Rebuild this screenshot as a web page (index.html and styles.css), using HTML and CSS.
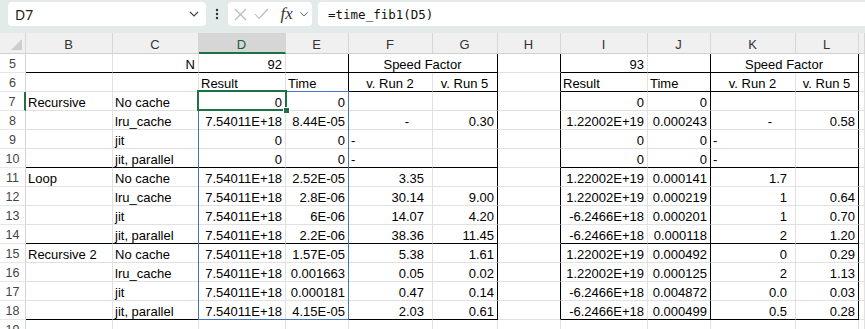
FILE: index.html
```html
<!DOCTYPE html>
<html lang="en">
<head>
    <meta charset="UTF-8">
    <title>time_fib1</title>
    <link rel="stylesheet" href="styles.css">
</head>
<body>
    <div class="bar">
        <div class="namebox">
            <span>D7</span>
            <svg class="chev" width="10" height="6" viewBox="0 0 10 6"><polyline points="1,1 5,5 9,1" fill="none" stroke="#444" stroke-width="1.2"/></svg>
        </div>
        <div class="dots">
            <svg width="4" height="12" viewBox="0 0 4 12"><circle cx="2" cy="2" r="1.2" fill="#333"/><circle cx="2" cy="6" r="1.2" fill="#333"/><circle cx="2" cy="10" r="1.2" fill="#333"/></svg>
        </div>
        <div class="fxbox">
            <svg width="13" height="13" viewBox="0 0 13 13"><path d="M1 1 L12 12 M12 1 L1 12" stroke="#b8b8b8" stroke-width="1.1" fill="none"/></svg>
            <svg width="15" height="12" viewBox="0 0 15 12"><polyline points="1,6 5,10.5 14,1" stroke="#b8b8b8" stroke-width="1.1" fill="none"/></svg>
            <span class="fx">fx</span>
            <svg width="8" height="5" viewBox="0 0 8 5"><polyline points="0.5,0.5 4,4 7.5,0.5" fill="none" stroke="#666" stroke-width="1"/></svg>
        </div>
        <div class="formula">=time_fib1(D5)</div>
    </div>

    <div class="sheet">
        <div class="row head">
            <div class="corner"><span class="tri"></span></div>
            <div>B</div><div>C</div><div class="cur">D</div><div>E</div><div>F</div><div>G</div>
            <div>H</div><div>I</div><div>J</div><div>K</div><div>L</div><div></div>
        </div>
        <div class="row">
            <div class="rh">5</div>
            <div class="bb"></div><div class="bb r">N</div><div class="bb r">92</div><div class="bb br"></div>
            <div class="bb br ctr span2">Speed Factor</div>
            <div class="br"></div>
            <div class="bb r">93</div><div class="bb br"></div>
            <div class="bb br ctr span2">Speed Factor</div>
            <div></div>
        </div>
        <div class="row">
            <div class="rh">6</div>
            <div></div><div></div><div>Result</div><div class="br">Time</div>
            <div class="bb ctr">v. Run 2</div><div class="bb br ctr">v. Run 5</div>
            <div class="br"></div>
            <div class="bb">Result</div><div class="bb br">Time</div>
            <div class="bb ctr">v. Run 2</div><div class="bb br ctr">v. Run 5</div>
            <div></div>
        </div>
        <div class="row">
            <div class="rh sel-row">7</div>
            <div>Recursive</div><div>No cache</div><div class="r">0</div><div class="r br">0</div>
            <div></div><div class="br"></div><div class="br"></div>
            <div class="r">0</div><div class="r br">0</div><div></div><div class="br"></div><div></div>
        </div>
        <div class="row">
            <div class="rh">8</div>
            <div></div><div>lru_cache</div><div class="r">7.54011E+18</div><div class="r br">8.44E-05</div>
            <div class="r dash">-</div><div class="r br">0.30</div><div class="br"></div>
            <div class="r">1.22002E+19</div><div class="r br">0.000243</div><div class="r dash">-</div><div class="r br">0.58</div><div></div>
        </div>
        <div class="row">
            <div class="rh">9</div>
            <div></div><div>jit</div><div class="r">0</div><div class="r br">0</div>
            <div>-</div><div class="br"></div><div class="br"></div>
            <div class="r">0</div><div class="r br">0</div><div>-</div><div class="br"></div><div></div>
        </div>
        <div class="row">
            <div class="rh">10</div>
            <div class="bb"></div><div class="bb">jit, parallel</div><div class="bb r">0</div><div class="bb r br">0</div>
            <div class="bb">-</div><div class="bb br"></div><div class="br"></div>
            <div class="bb r">0</div><div class="bb r br">0</div><div class="bb">-</div><div class="bb br"></div><div></div>
        </div>
        <div class="row">
            <div class="rh">11</div>
            <div>Loop</div><div>No cache</div><div class="r">7.54011E+18</div><div class="r br">2.52E-05</div>
            <div class="r pr">3.35</div><div class="br"></div><div class="br"></div>
            <div class="r">1.22002E+19</div><div class="r br">0.000141</div><div class="r pr">1.7</div><div class="br"></div><div></div>
        </div>
        <div class="row">
            <div class="rh">12</div>
            <div></div><div>lru_cache</div><div class="r">7.54011E+18</div><div class="r br">2.8E-06</div>
            <div class="r pr">30.14</div><div class="r br">9.00</div><div class="br"></div>
            <div class="r">1.22002E+19</div><div class="r br">0.000219</div><div class="r pr">1</div><div class="r br">0.64</div><div></div>
        </div>
        <div class="row">
            <div class="rh">13</div>
            <div></div><div>jit</div><div class="r">7.54011E+18</div><div class="r br">6E-06</div>
            <div class="r pr">14.07</div><div class="r br">4.20</div><div class="br"></div>
            <div class="r">-6.2466E+18</div><div class="r br">0.000201</div><div class="r pr">1</div><div class="r br">0.70</div><div></div>
        </div>
        <div class="row">
            <div class="rh">14</div>
            <div class="bb"></div><div class="bb">jit, parallel</div><div class="bb r">7.54011E+18</div><div class="bb r br">2.2E-06</div>
            <div class="bb r pr">38.36</div><div class="bb r br">11.45</div><div class="br"></div>
            <div class="bb r">-6.2466E+18</div><div class="bb r br">0.000118</div><div class="bb r pr">2</div><div class="bb r br">1.20</div><div></div>
        </div>
        <div class="row">
            <div class="rh">15</div>
            <div>Recursive 2</div><div>No cache</div><div class="r">7.54011E+18</div><div class="r br">1.57E-05</div>
            <div class="r pr">5.38</div><div class="r br">1.61</div><div class="br"></div>
            <div class="r">1.22002E+19</div><div class="r br">0.000492</div><div class="r pr">0</div><div class="r br">0.29</div><div></div>
        </div>
        <div class="row">
            <div class="rh">16</div>
            <div></div><div>lru_cache</div><div class="r">7.54011E+18</div><div class="r br">0.001663</div>
            <div class="r pr">0.05</div><div class="r br">0.02</div><div class="br"></div>
            <div class="r">1.22002E+19</div><div class="r br">0.000125</div><div class="r pr">2</div><div class="r br">1.13</div><div></div>
        </div>
        <div class="row">
            <div class="rh">17</div>
            <div></div><div>jit</div><div class="r">7.54011E+18</div><div class="r br">0.000181</div>
            <div class="r pr">0.47</div><div class="r br">0.14</div><div class="br"></div>
            <div class="r">-6.2466E+18</div><div class="r br">0.004872</div><div class="r pr">0.0</div><div class="r br">0.03</div><div></div>
        </div>
        <div class="row">
            <div class="rh">18</div>
            <div class="bb"></div><div class="bb">jit, parallel</div><div class="bb r">7.54011E+18</div><div class="bb r br">4.15E-05</div>
            <div class="bb r pr">2.03</div><div class="bb r br">0.61</div><div class="br"></div>
            <div class="bb r">-6.2466E+18</div><div class="bb r br">0.000499</div><div class="bb r pr">0.5</div><div class="bb r br">0.28</div><div></div>
        </div>
        <div class="row">
            <div class="rh">19</div>
            <div></div><div></div><div></div><div></div><div></div><div></div>
            <div></div><div></div><div></div><div></div><div></div><div></div>
        </div>

        <div class="refbox"></div>
        <div class="selbox"><span class="handle"></span></div>
    </div>
</body>
</html>
```

FILE: styles.css
```css
* {
    margin: 0;
    padding: 0;
    box-sizing: border-box;
}
body {
    width: 865px;
    height: 329px;
    overflow: hidden;
    background: #fff;
    font-family: "Liberation Sans", Arial, sans-serif;
    font-size: 13px;
    color: #000;
}

/* formula bar */
.bar {
    display: flex;
    height: 33px;
    padding: 2px 0 0 8px;
    background: #e2eaea;
}
.namebox, .fxbox, .formula {
    height: 24px;
    background: #fff;
    border-radius: 4px;
    display: flex;
    align-items: center;
}
.namebox {
    width: 198px;
    padding: 0 7px 0 7px;
    justify-content: space-between;
    font-family: "Noto Sans", sans-serif;
    font-size: 14px;
    color: #222;
}
.dots {
    width: 22px;
    display: flex;
    align-items: center;
    justify-content: center;
    height: 24px;
}
.fxbox {
    width: 84px;
    padding: 0 4px 0 6px;
    justify-content: space-between;
}
.fx {
    font-family: "Liberation Serif", serif;
    font-style: italic;
    font-size: 17px;
    color: #333;
    margin-left: 4px;
}
.formula {
    flex: 1;
    margin-left: 6px;
    border-radius: 4px 0 0 4px;
    padding-left: 10px;
    font-family: "DejaVu Sans Mono", monospace;
    font-size: 12.5px;
    color: #111;
}

/* grid */
.sheet {
    position: relative;
}
.row {
    display: grid;
    grid-template-columns: 26px 87px 86px 87px 63px 84px 65px 63px 87px 63px 85px 63px 1fr;
    height: 19px;
}
.row > div {
    border-right: 1px solid #e1e1e1;
    border-bottom: 1px solid #e1e1e1;
    padding: 2px 3px 0 2px;
    line-height: 17px;
    white-space: nowrap;
    overflow: hidden;
}
.row .r { text-align: right; }
.row .ctr { text-align: center; }
.row .pr { padding-right: 8px; }
.row .dash { padding-right: 23px; }
.row .bb { border-bottom-color: #000; }
.row .br { border-right-color: #000; }
.span2 { grid-column: span 2; }

.row .rh {
    text-align: center;
    padding: 2px 0 0;
    color: #444;
    font-size: 12.5px;
    border-right-color: #d4d4d4;
    border-bottom-color: #e6e6e6;
}
.row .sel-row {
    border-right: 2px solid #1e7145;
}

.head {
    height: 21px;
}
.row.head > div {
    background: #f0f0f0;
    text-align: center;
    color: #333;
    padding-top: 3px;
    border-right-color: #d6d6d6;
    border-bottom-color: #d0d0d0;
}
.row.head .cur {
    background: #d6d6d6;
    color: #14613a;
    border-bottom: 2px solid #1e7145;
}
.row.head .corner {
    position: relative;
}
.tri {
    position: absolute;
    right: 3px;
    bottom: 3px;
    width: 0;
    height: 0;
    border-left: 11px solid transparent;
    border-bottom: 11px solid #cdcdcd;
}

/* highlight overlays */
.refbox {
    position: absolute;
    left: 198px;
    top: 58px;
    width: 151px;
    height: 229px;
    border: 1px solid #4472c4;
    pointer-events: none;
}
.selbox {
    position: absolute;
    left: 197px;
    top: 57px;
    width: 90px;
    height: 21px;
    border: 2px solid #1e7145;
    pointer-events: none;
}
.handle {
    position: absolute;
    right: -5px;
    bottom: -5px;
    width: 7px;
    height: 7px;
    background: #1e7145;
    border: 1px solid #fff;
}
```
